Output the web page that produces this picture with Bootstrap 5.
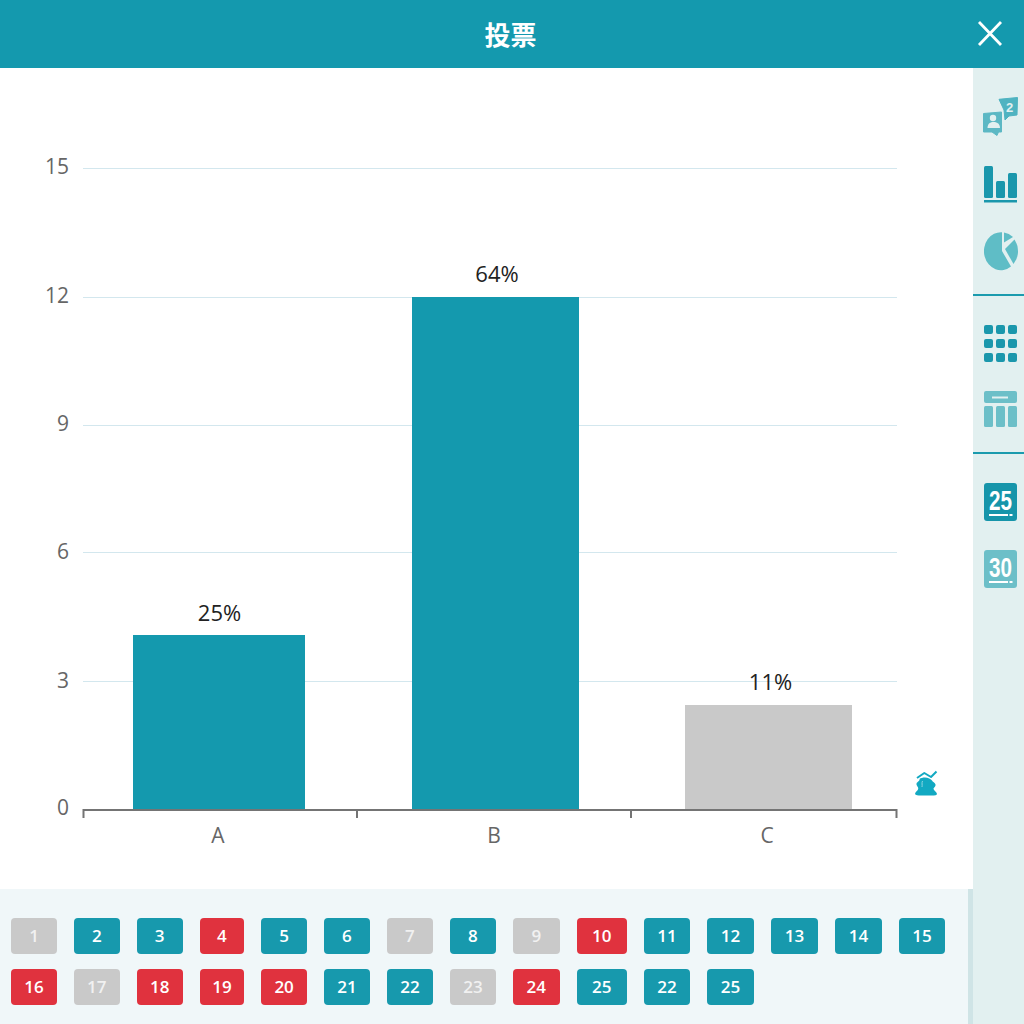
<!DOCTYPE html>
<html lang="zh">
<head>
    <meta charset="UTF-8">
    <meta name="viewport" content="width=device-width, initial-scale=1.0">
    <title>投票</title>
    <link href="https://cdn.jsdelivr.net/npm/bootstrap@5.3.0/dist/css/bootstrap.min.css" rel="stylesheet">
    <style>
        html, body { height: 100%; }
        body { overflow: hidden; background: #fff; font-family: "Open Sans", "Noto Sans CJK SC", sans-serif; }
        .vote-page { height: 1024px; }
        .vote-header { height: 68px; background: #1499ae; color: #fff; flex: none; }
        .vote-title { font-family: "Noto Sans CJK SC", sans-serif; font-size: 26px; font-weight: 700; line-height: 1; margin: 0 3px 0 0; }
        .vote-close { top: 20px; right: 21px; width: 26px; height: 26px; padding: 0; border: 0; background: none; line-height: 0; }
        .chart-pane { height: 821px; flex: none; }
        .chart-pane svg { display: block; }
        .tick-label { font-family: "Open Sans", sans-serif; font-size: 21px; fill: #666; }
        .value-label { font-family: "Open Sans", sans-serif; font-size: 22px; fill: #222; }
        .num-pane { flex: 1; background: #f0f7f9; border-right: 5px solid #cfe4e6; padding: 29px 0 0 11px; }
        .num-grid { display: grid; grid-template-columns: 46px 45.7px 45.9px 44.7px 45.7px 46px 46px 46px 46.7px 50.3px 46px 47px 47px 47px 46px; column-gap: 17px; row-gap: 15px; }
        .num-btn { width: 100%; height: 36px; padding: 0; border: 0; border-radius: 4px; color: #fff; font-size: 17px; font-weight: 600; line-height: 36px; text-align: center; }
        .num-ok { background: #1799ad; }
        .num-bad { background: #e0323e; }
        .num-none { background: #c9c9c9; color: #f1f1f1; }
        .tool-rail { width: 51px; flex: none; background: #e2f0f0; }
        .tool-group { padding: 29px 0 0 10px; gap: 28px; }
        .tool-group + .tool-group { border-top: 2px solid #1b9bae; }
        .tool-top { height: 226px; gap: 29px; }
        .tool-mid { height: 158px; }
        .tool-group svg { display: block; }
        .badge-num { font-family: "Liberation Sans", sans-serif; font-weight: 700; font-size: 28px; fill: #fff; }
    </style>
</head>
<body>

<div class="vote-page d-flex flex-column">
    <div class="vote-header d-flex align-items-center justify-content-center position-relative">
        <h1 class="vote-title">投票</h1>
        <button type="button" class="vote-close position-absolute" aria-label="close">
            <svg width="26" height="26" viewBox="0 0 26 26"><path d="M2 2 24 25M24 2 2 25" stroke="#fff" stroke-width="2.8" fill="none"/></svg>
        </button>
    </div>

    <div class="d-flex flex-grow-1">
        <div class="d-flex flex-column flex-grow-1">
            <div class="chart-pane">
                <svg width="973" height="821" viewBox="0 68 973 821">
                    <g stroke="#d3e7ee" stroke-width="1.200">
                        <line x1="83" y1="168.500" x2="897" y2="168.500"/>
                        <line x1="83" y1="297.500" x2="897" y2="297.500"/>
                        <line x1="83" y1="425.500" x2="897" y2="425.500"/>
                        <line x1="83" y1="552.500" x2="897" y2="552.500"/>
                        <line x1="83" y1="681.500" x2="897" y2="681.500"/>
                    </g>
                    <g class="tick-label" text-anchor="end">
                        <text x="69" y="174">15</text>
                        <text x="69" y="303">12</text>
                        <text x="69" y="431">9</text>
                        <text x="69" y="559">6</text>
                        <text x="69" y="688">3</text>
                        <text x="69" y="815">0</text>
                    </g>
                    <rect x="133" y="635" width="172" height="175" fill="#1499ae"/>
                    <rect x="412" y="297" width="167" height="513" fill="#1499ae"/>
                    <rect x="685" y="705" width="167" height="105" fill="#c9c9c9"/>
                    <path d="M83.5 818V810H896.500V818M357 810V818M631 810V818" fill="none" stroke="#747474" stroke-width="2"/>
                    <g class="value-label" text-anchor="middle">
                        <text x="219.500" y="621">25%</text>
                        <text x="497" y="282">64%</text>
                        <text x="770.500" y="690">11%</text>
                    </g>
                    <g class="tick-label" text-anchor="middle">
                        <text x="218" y="843">A</text>
                        <text x="494" y="843">B</text>
                        <text x="767" y="843">C</text>
                    </g>
                    <path d="M917 778 924.300 773 931 777 936.500 771.500" fill="none" stroke="#12a9c2" stroke-width="2" stroke-linejoin="round"/>
                    <path d="M919.500 779C920.500 781 916 782 916.500 784.500 917 786.500 919 787.500 918 789.500 917.500 791 915 792 915 794 915.500 795.500 918 795.500 921 795.500H931C934 795.500 936.800 795.500 937 794 937 792 934 791 933.500 789 933.500 787.500 936 786.500 935.500 784.500 935 782.500 932.500 782 932 780.500 931 779 928 777.500 925 777.500 923 777.500 920.500 778 919.500 779Z" fill="#12a9c2"/>
                    <path d="M922.500 781C921.500 783 922.500 785 922 787" fill="none" stroke="#8fd6e2" stroke-width="1"/>
                </svg>
            </div>
            <div class="num-pane">
                <div class="num-grid" id="numGrid"></div>
            </div>
        </div>

        <div class="tool-rail">
            <div class="tool-group tool-top d-flex flex-column">
                <svg width="36" height="39" viewBox="0 0 36 39">
                    <path d="M16 2.300 34.500 .5 34 18 26 19 22 23 21 13Z" fill="#4fb3c1" stroke="#4fb3c1" stroke-linejoin="round"/>
                    <text x="26.500" y="14.500" font-family="Liberation Sans" font-size="13" font-weight="700" fill="#e2f0f0" text-anchor="middle">2</text>
                    <path d="M.5 16.500 18.500 15V35H15.500L14 38.500 9 35H.5Z" fill="#5cb8c4" stroke="#5cb8c4" stroke-linejoin="round"/>
                    <circle cx="10" cy="21" r="3.200" fill="#e2f0f0"/>
                    <path d="M4.500 31C4.500 26.500 7.500 25 10.500 25S17 26.500 17 31Z" fill="#e2f0f0"/>
                </svg>
                <svg width="36" height="38" viewBox="0 0 36 38">
                    <rect x="1" y="1" width="9" height="32" rx="1.500" fill="#1a97ac"/>
                    <rect x="13" y="16" width="9" height="17" rx="1.500" fill="#1a97ac"/>
                    <rect x="25" y="8" width="9" height="25" rx="1.500" fill="#1a97ac"/>
                    <rect x="1" y="35" width="33" height="2.500" fill="#1a97ac"/>
                </svg>
                <svg width="36" height="39" viewBox="0 0 36 39">
                    <path d="M19 19V0.2A17 19 0 1 0 28 34.500Z" fill="#5fbdc6"/>
                    <path d="M21 10.500V.5A17 19 0 0 1 30 5Z" fill="#5fbdc6"/>
                    <path d="M22 17 31.500 7.500A17 19 0 0 1 30.500 32Z" fill="#5fbdc6"/>
                </svg>
            </div>
            <div class="tool-group tool-mid d-flex flex-column">
                <svg width="36" height="38" viewBox="0 0 36 38">
                    <g fill="#1a97ac">
                        <rect x="1" y="0" width="9" height="9" rx="2"/><rect x="13" y="0" width="9" height="9" rx="2"/><rect x="25" y="0" width="9" height="9" rx="2"/>
                        <rect x="1" y="14" width="9" height="9" rx="2"/><rect x="13" y="14" width="9" height="9" rx="2"/><rect x="25" y="14" width="9" height="9" rx="2"/>
                        <rect x="1" y="28" width="9" height="9" rx="2"/><rect x="13" y="28" width="9" height="9" rx="2"/><rect x="25" y="28" width="9" height="9" rx="2"/>
                    </g>
                </svg>
                <svg width="36" height="38" viewBox="0 0 36 38">
                    <g fill="#6cbfc8">
                        <rect x="1" y="0" width="33" height="12" rx="2"/>
                        <rect x="1" y="15" width="9" height="21" rx="1.500"/><rect x="13" y="15" width="9" height="21" rx="1.500"/><rect x="25" y="15" width="9" height="21" rx="1.500"/>
                    </g>
                    <rect x="9" y="5.500" width="16" height="2" fill="#e2f0f0"/>
                </svg>
            </div>
            <div class="tool-group d-flex flex-column">
                <svg width="36" height="39" viewBox="0 0 36 39">
                    <rect x="1" y="0" width="33" height="38" rx="3" fill="#1695aa"/>
                    <text class="badge-num" x="17.500" y="27" text-anchor="middle" textLength="23" lengthAdjust="spacingAndGlyphs">25</text>
                    <rect x="6" y="31" width="19" height="2" fill="#fff"/><rect x="26.500" y="31" width="3" height="2" fill="#fff"/>
                </svg>
                <svg width="36" height="39" viewBox="0 0 36 39">
                    <rect x="1" y="0" width="33" height="38" rx="3" fill="#6cbfc8"/>
                    <text class="badge-num" x="17.500" y="27" text-anchor="middle" textLength="23" lengthAdjust="spacingAndGlyphs">30</text>
                    <rect x="6" y="31" width="19" height="2" fill="#fff"/><rect x="26.500" y="31" width="3" height="2" fill="#fff"/>
                </svg>
            </div>
        </div>
    </div>
</div>

<script src="https://cdn.jsdelivr.net/npm/bootstrap@5.3.0/dist/js/bootstrap.bundle.min.js"></script>
<script>
    // answer sheet: number shown on the button + its state
    const answers = [
        [1, "none"], [2, "ok"], [3, "ok"], [4, "bad"], [5, "ok"], [6, "ok"], [7, "none"], [8, "ok"],
        [9, "none"], [10, "bad"], [11, "ok"], [12, "ok"], [13, "ok"], [14, "ok"], [15, "ok"],
        [16, "bad"], [17, "none"], [18, "bad"], [19, "bad"], [20, "bad"], [21, "ok"], [22, "ok"], [23, "none"],
        [24, "bad"], [25, "ok"], [22, "ok"], [25, "ok"]
    ];
    const grid = document.getElementById("numGrid");
    answers.forEach(function (a) {
        const b = document.createElement("button");
        b.type = "button";
        b.className = "num-btn num-" + a[1];
        b.innerText = a[0];
        grid.appendChild(b);
    });
</script>

</body>
</html>
